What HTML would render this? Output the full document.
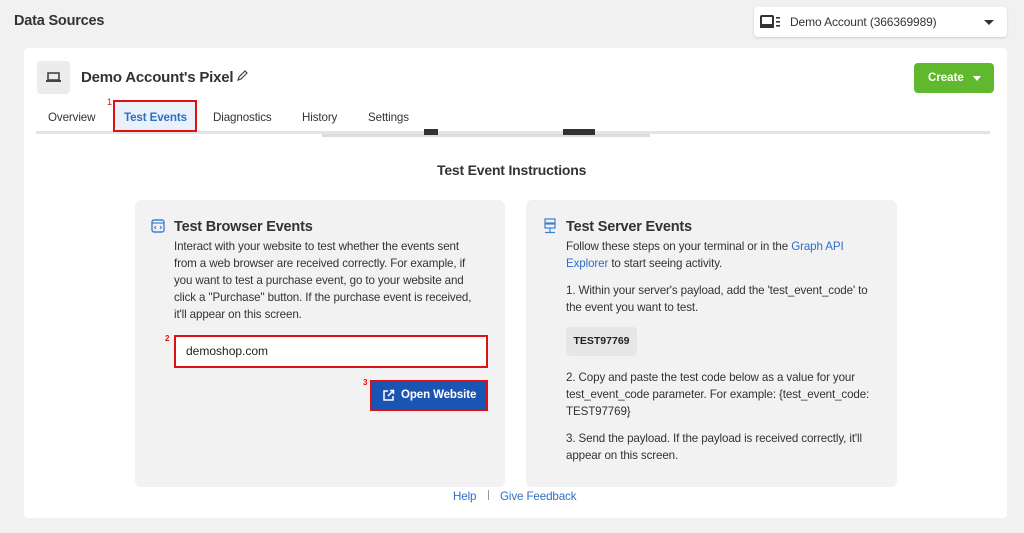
<!DOCTYPE html>
<html><head><style>
*{margin:0;padding:0;box-sizing:border-box}
body{width:1024px;height:533px;background:#f1f1f1;font-family:"Liberation Sans",Arial,sans-serif;color:#1c1e21;position:relative;overflow:hidden}
.a{position:absolute}
.p{font-size:11.6px;line-height:17px;color:#333;letter-spacing:-0.12px}
.t{font-size:14.5px;font-weight:bold;color:#333;letter-spacing:-0.2px}
.blue{color:#2f6fc4}
</style></head><body>
<div class="a t" style="left:14px;top:13px">Data Sources</div>
<div class="a" style="left:754px;top:7px;width:253px;height:30px;background:#fff;border-radius:4px;box-shadow:0 1px 2px rgba(0,0,0,.15)">
 <svg class="a" style="left:6px;top:8px" width="22" height="14" viewBox="0 0 22 14"><rect x="1" y="1" width="12" height="9" rx="1" fill="none" stroke="#333" stroke-width="2"/><rect x="0" y="10" width="14" height="3" fill="#333"/><rect x="16" y="2" width="4" height="1.6" fill="#333"/><rect x="16" y="6" width="4" height="1.6" fill="#333"/><rect x="16" y="10" width="4" height="1.6" fill="#333"/></svg>
 <div class="a p" style="left:36px;top:7px;font-size:12px">Demo Account (366369989)</div>
 <div class="a" style="left:230px;top:13px;border-left:5px solid transparent;border-right:5px solid transparent;border-top:5px solid #333"></div>
</div>
<div class="a" style="left:24px;top:48px;width:983px;height:470px;background:#fff;border-radius:4px"></div>
<div class="a" style="left:37px;top:61px;width:33px;height:33px;background:#ececec;border-radius:4px"></div>
<svg class="a" style="left:46px;top:72px" width="15" height="11" viewBox="0 0 15 11"><rect x="2" y="1" width="11" height="7" fill="none" stroke="#444" stroke-width="1.6"/><rect x="0" y="8" width="15" height="2" fill="#444"/></svg>
<div class="a t" style="left:81px;top:69px;font-size:15px">Demo Account's Pixel</div>
<svg class="a" style="left:236px;top:69px" width="13" height="13" viewBox="0 0 13 13"><path d="M2 11 L3 8 L9 2 L11 4 L5 10 Z" fill="none" stroke="#444" stroke-width="1.2"/></svg>
<div class="a" style="left:914px;top:63px;width:80px;height:30px;background:#5fb82e;border-radius:4px;color:#fff;font-size:11.5px;font-weight:bold;line-height:30px;padding-left:14px">Create</div>
<div class="a" style="left:973px;top:76px;border-left:4px solid transparent;border-right:4px solid transparent;border-top:5px solid #fff"></div>
<div class="a" style="left:36px;top:131px;width:954px;height:3px;background:#e4e4e4"></div>
<div class="a" style="left:322px;top:134px;width:328px;height:3px;background:#ddd"></div>
<div class="a" style="left:424px;top:129px;width:14px;height:6px;background:#333"></div>
<div class="a" style="left:563px;top:129px;width:32px;height:6px;background:#333"></div>
<div class="a p" style="left:48px;top:109px">Overview</div>
<div class="a" style="left:113px;top:100px;width:84px;height:32px;border:2px solid #e01010;background:#e9f1fb"></div>
<div class="a" style="left:107px;top:97px;font-size:9px;color:#e01010">1</div>
<div class="a p blue" style="left:124px;top:109px;font-weight:bold">Test Events</div>
<div class="a p" style="left:213px;top:109px">Diagnostics</div>
<div class="a p" style="left:302px;top:109px">History</div>
<div class="a p" style="left:368px;top:109px">Settings</div>
<div class="a t" style="left:437px;top:162px;font-size:14px">Test Event Instructions</div>

<div class="a" style="left:135px;top:200px;width:370px;height:287px;background:#f2f2f2;border-radius:6px"></div>
<svg class="a" style="left:151px;top:219px" width="14" height="14" viewBox="0 0 14 14"><rect x="1" y="1" width="12" height="12" rx="2" fill="none" stroke="#3f7fd0" stroke-width="1.4"/><line x1="1" y1="4" x2="13" y2="4" stroke="#3f7fd0" stroke-width="1.2"/><path d="M5 7 L3.5 8.5 L5 10 M9 7 L10.5 8.5 L9 10" fill="none" stroke="#3f7fd0" stroke-width="1"/></svg>
<div class="a t" style="left:174px;top:219px">Test Browser Events</div>
<div class="a p" style="left:174px;top:238px;width:330px">Interact with your website to test whether the events sent<br>from a web browser are received correctly. For example, if<br>you want to test a purchase event, go to your website and<br>click a "Purchase" button. If the purchase event is received,<br>it'll appear on this screen.</div>
<div class="a" style="left:165px;top:334px;font-size:8px;color:#e01010;font-weight:bold">2</div>
<div class="a" style="left:174px;top:335px;width:314px;height:33px;border:2px solid #e01010;background:#fff;font-size:12px;line-height:29px;padding-left:10px;color:#222">demoshop.com</div>
<div class="a" style="left:363px;top:378px;font-size:8px;color:#e01010;font-weight:bold">3</div>
<div class="a" style="left:370px;top:380px;width:118px;height:31px;border:2px solid #e01010;background:#1b55b3"></div>
<svg class="a" style="left:382px;top:389px" width="13" height="13" viewBox="0 0 13 13"><path d="M6 2 H2 V11 H11 V7 M8 1.5 H11.5 V5 M11.5 1.5 L6 7" fill="none" stroke="#fff" stroke-width="1.5"/></svg>
<div class="a" style="left:401px;top:389px;font-size:11.5px;font-weight:bold;color:#fff;letter-spacing:-0.1px">Open Website</div>

<div class="a" style="left:526px;top:200px;width:371px;height:287px;background:#f2f2f2;border-radius:6px"></div>
<svg class="a" style="left:544px;top:218px" width="12" height="16" viewBox="0 0 12 16"><rect x="1" y="1" width="10" height="4" fill="none" stroke="#3f7fd0" stroke-width="1.2"/><rect x="1" y="6" width="10" height="4" fill="none" stroke="#3f7fd0" stroke-width="1.2"/><line x1="6" y1="10" x2="6" y2="14" stroke="#3f7fd0" stroke-width="1.2"/><line x1="1" y1="14.5" x2="11" y2="14.5" stroke="#3f7fd0" stroke-width="1.2"/></svg>
<div class="a t" style="left:566px;top:219px">Test Server Events</div>
<div class="a p" style="left:566px;top:238px;width:330px">Follow these steps on your terminal or in the <span class="blue">Graph API<br>Explorer</span> to start seeing activity.</div>
<div class="a p" style="left:566px;top:282px;width:330px">1. Within your server's payload, add the 'test_event_code' to<br>the event you want to test.</div>
<div class="a" style="left:566px;top:327px;width:71px;height:29px;background:#e6e6e6;border-radius:4px;font-size:10.5px;font-weight:bold;line-height:29px;text-align:center;color:#222">TEST97769</div>
<div class="a p" style="left:566px;top:369px;width:330px">2. Copy and paste the test code below as a value for your<br>test_event_code parameter. For example: {test_event_code:<br>TEST97769}</div>
<div class="a p" style="left:566px;top:430px;width:330px">3. Send the payload. If the payload is received correctly, it'll<br>appear on this screen.</div>

<div class="a p blue" style="left:453px;top:488px">Help</div>
<div class="a" style="left:488px;top:490px;width:1px;height:10px;background:#999"></div>
<div class="a p blue" style="left:500px;top:488px">Give Feedback</div>
</body></html>
